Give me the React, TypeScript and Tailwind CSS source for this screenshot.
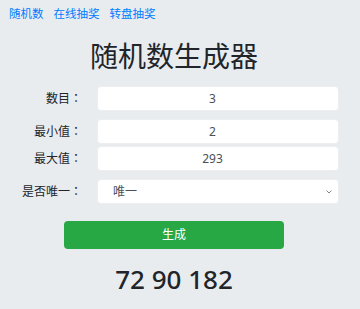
import React from "react";

const font = { fontFamily: '"Noto Sans", "Noto Sans CJK SC", sans-serif' };
const labelFont = { fontFamily: '"Noto Sans", "Noto Sans CJK JP", sans-serif' };

function Row({ label, children, className }: { label: string; children: React.ReactNode; className?: string }) {
  return (
    <div className={"flex items-center " + (className ?? "")}>
      <div className="w-[88px] shrink-0 pr-[15px] text-right text-[12px] text-[#212529]" style={labelFont}>
        {label}
      </div>
      <div className="flex-1">{children}</div>
    </div>
  );
}

function NumInput({ value }: { value: string }) {
  return (
    <input
      readOnly
      value={value}
      className="block h-[25px] w-full rounded-[4px] border border-[#eceef0] bg-white pl-[12px] pr-[23px] text-center text-[12px] text-[#495057] outline-none"
      style={font}
    />
  );
}

export default function App() {
  return (
    <div className="min-h-[309px] w-[360px] bg-[#e9ecef]" style={font}>
      <div className="w-[348px] px-[9px]">
        <nav className="flex h-[28px] items-center gap-[10px] text-[11.5px] text-[#007bff]">
          <a>随机数</a>
          <a>在线抽奖</a>
          <a>转盘抽奖</a>
        </nav>
        <h1 className="mt-[8px] h-[40px] text-center text-[28px] leading-[40px] font-normal text-[#212529]">随机数生成器</h1>
        <div className="mt-[10px]">
          <Row label="数目：">
            <NumInput value="3" />
          </Row>
          <Row label="最小值：" className="mt-[8px]">
            <NumInput value="2" />
          </Row>
          <Row label="最大值：" className="mt-[2px]">
            <NumInput value="293" />
          </Row>
          <Row label="是否唯一：" className="mt-[8px]">
            <div className="relative h-[25px] w-full rounded-[4px] border border-[#eceef0] bg-white">
              <div className="flex h-full items-center pl-[15px] text-[12px] text-[#495057]">唯一</div>
              <svg className="absolute right-[6px] top-[10px]" width="6" height="4" viewBox="0 0 6 4">
                <path d="M0.5 0.5 L3 3 L5.5 0.5" fill="none" stroke="#777" strokeWidth="0.9" />
              </svg>
            </div>
          </Row>
        </div>
        <div className="mt-[17px] flex justify-center">
          <button className="h-[28px] w-[220px] rounded-[4px] bg-[#28a745] text-[12px] text-white" style={font}>
            生成
          </button>
        </div>
        <div className="mt-[12px] text-center text-[26px] leading-[36px] font-medium text-[#212529]">72 90 182</div>
      </div>
    </div>
  );
}
